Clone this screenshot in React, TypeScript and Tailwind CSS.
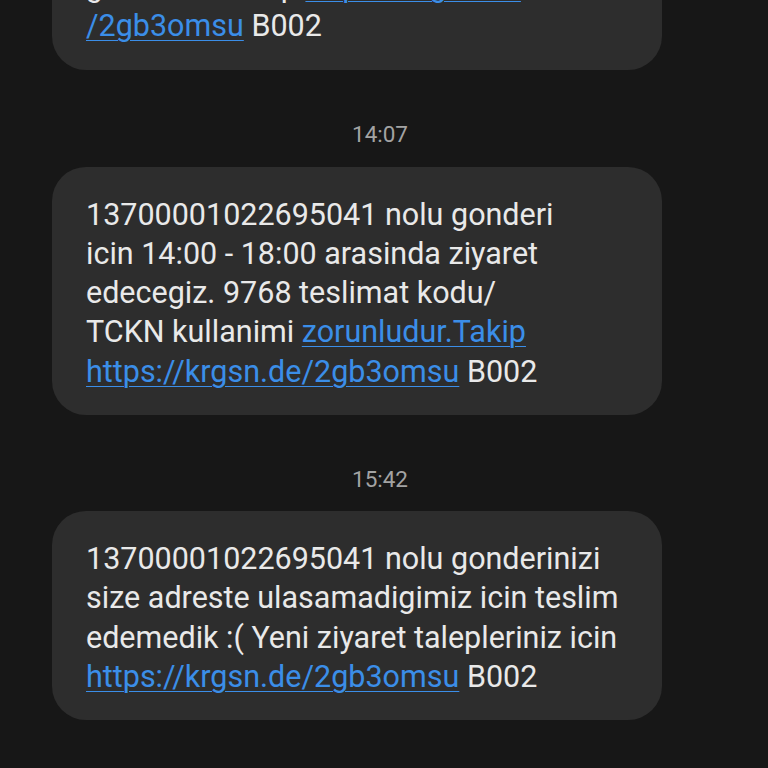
import React from 'react';

const font = { fontFamily: 'Roboto, "Noto Sans", sans-serif' };

function Link({ children }: { children: React.ReactNode }) {
  return (
    <span className="text-[#3b8ee8] underline decoration-1 underline-offset-[4px]">{children}</span>
  );
}

function Bubble({ lines, className = '' }: { lines: React.ReactNode[]; className?: string }) {
  return (
    <div className={`ml-[52px] w-[610px] rounded-[34px] bg-[#2d2d2d] pl-[34px] pr-4 pt-[28px] pb-[24px] ${className}`}>
      {lines.map((l, i) => (
        <div key={i} className="whitespace-nowrap text-[30.5px] leading-[39.3px] text-[#e9e9e9]">
          {l}
        </div>
      ))}
    </div>
  );
}

function Time({ label, className = '' }: { label: string; className?: string }) {
  return (
    <div className={`text-center text-[22.5px] leading-[30px] text-[#a3a3a3] ${className}`}>
      <span className="mr-[8px]">{label}</span>
    </div>
  );
}

export default function App() {
  return (
    <div className="h-[768px] w-[768px] overflow-hidden bg-[#171717]" style={font}>
      <Bubble
        className="-mt-[61px]"
        lines={[
          <>gecerlidir. Takip <Link>https://krgsn.de</Link></>,
          <><Link>/2gb3omsu</Link> B002</>,
        ]}
      />
      <Time label="14:07" className="mt-[49px] mb-[18px]" />
      <Bubble
        lines={[
          '13700001022695041 nolu gonderi',
          'icin 14:00 - 18:00 arasinda ziyaret',
          'edecegiz. 9768 teslimat kodu/',
          <>TCKN kullanimi <Link>zorunludur.Takip</Link></>,
          <><Link>https://krgsn.de/2gb3omsu</Link> B002</>,
        ]}
      />
      <Time label="15:42" className="mt-[49px] mb-[17px]" />
      <Bubble
        lines={[
          '13700001022695041 nolu gonderinizi',
          'size adreste ulasamadigimiz icin teslim',
          'edemedik :( Yeni ziyaret talepleriniz icin',
          <><Link>https://krgsn.de/2gb3omsu</Link> B002</>,
        ]}
      />
    </div>
  );
}
